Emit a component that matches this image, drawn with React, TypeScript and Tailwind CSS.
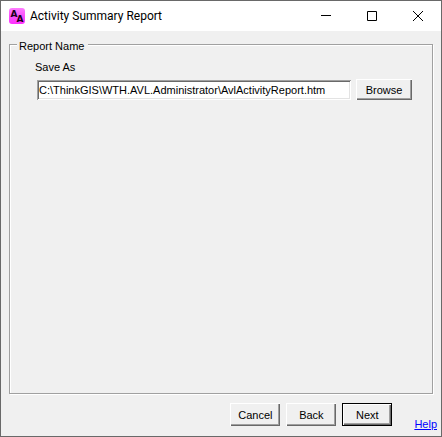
import { useState } from 'react'
import type { ButtonHTMLAttributes } from 'react'

const AppIcon = () => (
  <svg className="size-4 shrink-0" viewBox="0 0 16 16" aria-hidden="true">
    <defs>
      <linearGradient id="iconFill" x1="0" y1="0" x2="0" y2="1">
        <stop offset="0" stopColor="#ff7cff" />
        <stop offset="0.5" stopColor="#f850fa" />
        <stop offset="1" stopColor="#ff30ff" />
      </linearGradient>
    </defs>
    <rect width="16" height="16" rx="3" fill="url(#iconFill)" />
    <g className="font-['DejaVu_Sans',sans-serif] text-[9px] font-bold" fill="#1a001a">
      <text x="1.5" y="8.5">A</text>
      <text x="7.5" y="14">A</text>
    </g>
  </svg>
)

const TitleBar = ({ title }: { title: string }) => (
  <header className="flex h-[30px] items-center bg-white pl-2">
    <AppIcon />
    <h1 className="ml-[5px] grow font-[Roboto,sans-serif] text-[12px] leading-4">{title}</h1>
    <button type="button" aria-label="Minimize" className="flex h-full w-[46px] items-center justify-center">
      <svg className="size-[10px]" viewBox="0 0 10 10" stroke="#000" fill="none"><path d="M0 4.5h10" /></svg>
    </button>
    <button type="button" aria-label="Maximize" className="flex h-full w-[46px] items-center justify-center">
      <svg className="size-[10px]" viewBox="0 0 10 10" stroke="#000" fill="none"><path d="M.5.5h9v9h-9z" /></svg>
    </button>
    <button type="button" aria-label="Close" className="flex h-full w-[46px] items-center justify-center">
      <svg className="size-[10px]" viewBox="0 0 10 10" stroke="#000" fill="none"><path d="M0 0l10 10M10 0L0 10" /></svg>
    </button>
  </header>
)

type PushButtonProps = ButtonHTMLAttributes<HTMLButtonElement> & { primary?: boolean }

const PushButton = ({ primary, className = '', ...props }: PushButtonProps) => (
  <button
    type="button"
    className={`bg-[#f0f0f0] shadow-[inset_1px_1px_0_#fff,inset_-1px_-1px_0_#696969,inset_-2px_-2px_0_#a0a0a0] ${
      primary ? 'border border-black' : ''
    } ${className}`}
    {...props}
  />
)

const App = () => {
  const [path, setPath] = useState('C:\\ThinkGIS\\WTH.AVL.Administrator\\AvlActivityReport.htm')

  return (
    <div className="flex min-h-screen flex-col border border-[#696969] bg-[#f0f0f0] font-['Liberation_Sans',Arial,sans-serif] text-[11px] leading-[14px] text-black">
      <TitleBar title="Activity Summary Report" />
      <main className="flex grow flex-col pt-2 pl-2">
        <fieldset className="mr-2 min-w-0 grow border border-[#a0a0a0] pr-5 pl-[27px] shadow-[1px_1px_0_#fff,inset_1px_1px_0_#fff]">
          <legend className="-ml-5 h-[11px] bg-[#f0f0f0] pr-1 pl-[2px]">Report Name</legend>
          <label htmlFor="saveAs" className="mt-[10px] -ml-[2px] block">Save As</label>
          <div className="mt-[5px] flex items-center gap-[5px]">
            <input
              id="saveAs"
              type="text"
              value={path}
              onChange={(e) => setPath(e.target.value)}
              className="h-5 min-w-0 grow bg-white px-[2px] shadow-[inset_1px_1px_0_#a0a0a0,inset_-1px_-1px_0_#fff,inset_2px_2px_0_#696969,inset_-2px_-2px_0_#e3e3e3] outline-none"
            />
            <PushButton className="h-[21px] w-14">Browse</PushButton>
          </div>
        </fieldset>
        <footer className="flex justify-end gap-[22px] pt-[9px] pr-1 pb-[5px]">
          <div className="flex gap-[6px] pb-[5px]">
            <PushButton className="h-[23px] w-[50px]">Cancel</PushButton>
            <PushButton className="h-[23px] w-[50px]">Back</PushButton>
            <PushButton primary className="h-[23px] w-[50px]">Next</PushButton>
          </div>
          <a href="#help" className="self-end text-[#0000ff] underline">Help</a>
        </footer>
      </main>
    </div>
  )
}

export default App
